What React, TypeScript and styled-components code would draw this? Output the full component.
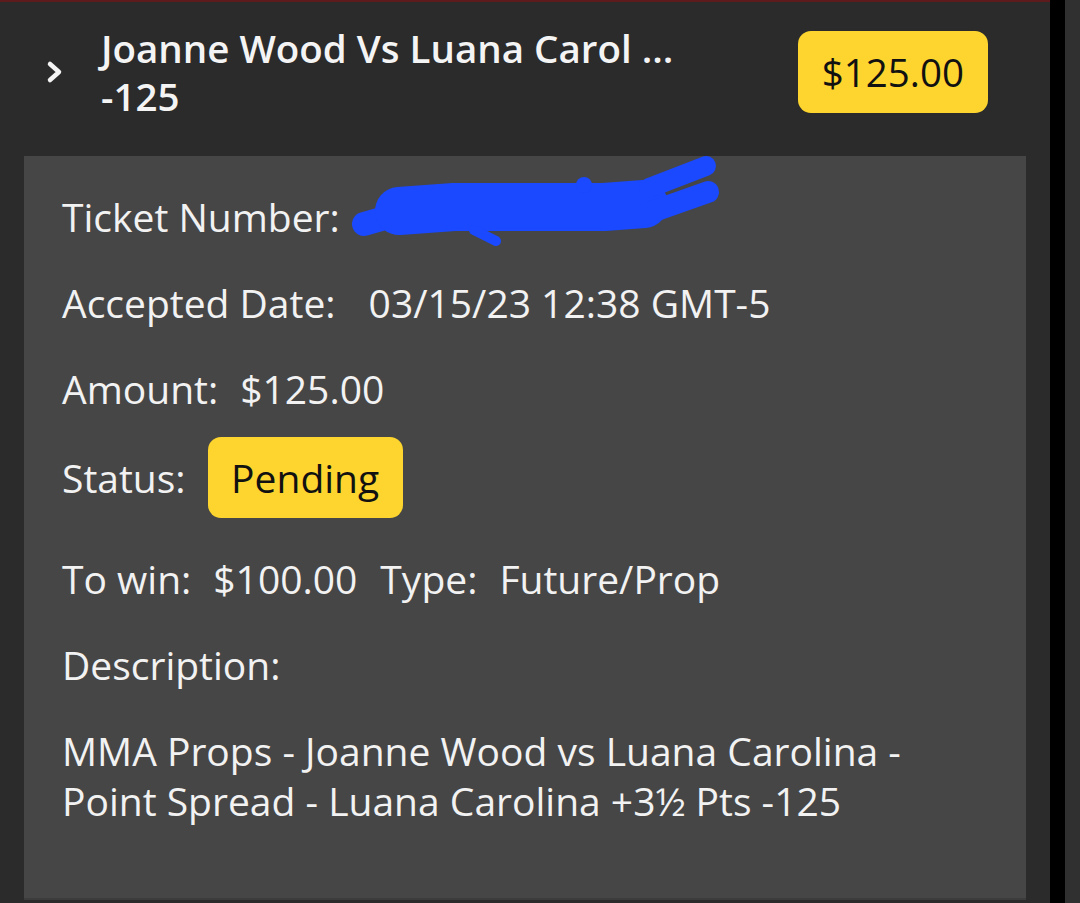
import styled, { createGlobalStyle } from "styled-components";

const GlobalStyle = createGlobalStyle`
    html, body {
        margin: 0;
        padding: 0;
        background: #2b2b2b;
        font-family: "Open Sans", "Liberation Sans", sans-serif;
    }
`;

const Page = styled.div`
    display: flex;
    height: 903px;
    overflow: hidden;
`;

const Main = styled.div`
    width: 1050px;
    border-top: 2px solid #5e1b1e;
    display: flex;
    flex-direction: column;
`;

const ScrollTrack = styled.div`
    width: 15px;
    background: #000;
`;

const ScrollEdge = styled.div`
    width: 15px;
    background: #303030;
`;

const Header = styled.div`
    display: flex;
    align-items: center;
    height: 154px;
    padding: 0 62px 14px 45px;
    box-sizing: border-box;
`;

const Chevron = styled.svg`
    width: 20px;
    height: 24px;
    flex: none;
    margin-right: 36px;
`;

const Title = styled.div`
    flex: 1;
    color: #f4f4f4;
    font-size: 38.5px;
    font-weight: 600;
    line-height: 48px;
`;

const Badge = styled.span<{ $large?: boolean }>`
    display: inline-flex;
    align-items: center;
    justify-content: center;
    background: #fdd52e;
    color: #111;
    border-radius: 13px;
    height: ${(p) => (p.$large ? "82px" : "81px")};
    padding: 0 ${(p) => (p.$large ? "24px" : "23.5px")};
    font-size: ${(p) => (p.$large ? "38.5px" : "39px")};
    font-weight: ${(p) => (p.$large ? 500 : 400)};
    box-sizing: border-box;
`;

const Panel = styled.div`
    margin: 0 24px;
    height: 744px;
    background: #464646;
    border-bottom: 2px solid #3c3c3c;
    padding: 36px 38px 0;
    box-sizing: border-box;
    color: #f2f2f2;
    font-size: 39px;
    line-height: 50px;
`;

const Row = styled.div<{ $top?: number }>`
    display: flex;
    align-items: center;
    margin-top: ${(p) => (p.$top ?? 36)}px;
    &:first-child {
        margin-top: 0;
    }
`;

const Label = styled.span<{ $gap?: number }>`
    margin-right: ${(p) => (p.$gap ?? 22)}px;
    white-space: nowrap;
`;

const Value = styled.span`
    margin-right: 23px;
    white-space: nowrap;
`;

const Redacted = styled.svg`
    width: 390px;
    height: 100px;
    align-self: flex-start;
    margin: -42px 0 -8px -10px;
`;

const Description = styled.p`
    margin: 36px 0 0;
`;

function Scribble() {
    const c = "#1a49ff";
    return (
        <Redacted viewBox="340 150 390 100">
            <g stroke={c} strokeLinecap="round" strokeLinejoin="round" fill="none">
                <path d="M360,224 L395,214" strokeWidth={24} />
                <path d="M395,211 L450,207 L600,207 L640,204" strokeWidth={48} />
                <path d="M470,230 L492,241" strokeWidth={10} />
                <path d="M645,188 L702,166" strokeWidth={20} />
                <path d="M636,216 L704,192" strokeWidth={22} />
            </g>
            <circle cx={580} cy={185} r={8} fill={c} />
        </Redacted>
    );
}

export default function App() {
    return (
        <>
            <GlobalStyle />
            <Page>
                <Main>
                    <Header>
                        <Chevron viewBox="0 0 20 24">
                            <polyline
                                points="5,4 14,12 5,20"
                                fill="none"
                                stroke="#f4f4f4"
                                strokeWidth={4.5}
                                strokeLinecap="round"
                                strokeLinejoin="round"
                            />
                        </Chevron>
                        <Title>
                            Joanne Wood Vs Luana Carol ...
                            <br />
                            -125
                        </Title>
                        <Badge $large>$125.00</Badge>
                    </Header>
                    <Panel>
                        <Row>
                            <Label $gap={14}>Ticket Number:</Label>
                            <Scribble />
                        </Row>
                        <Row>
                            <Label $gap={33}>Accepted Date:</Label>
                            <Value>03/15/23 12:38 GMT-5</Value>
                        </Row>
                        <Row>
                            <Label>Amount:</Label>
                            <Value>$125.00</Value>
                        </Row>
                        <Row $top={23}>
                            <Label>Status:</Label>
                            <Badge>Pending</Badge>
                        </Row>
                        <Row>
                            <Label>To win:</Label>
                            <Value>$100.00</Value>
                            <Label>Type:</Label>
                            <Value>Future/Prop</Value>
                        </Row>
                        <Row>
                            <Label>Description:</Label>
                        </Row>
                        <Description>
                            MMA Props - Joanne Wood vs Luana Carolina -
                            <br />
                            Point Spread - Luana Carolina +3½ Pts -125
                        </Description>
                    </Panel>
                </Main>
                <ScrollTrack />
                <ScrollEdge />
            </Page>
        </>
    );
}
